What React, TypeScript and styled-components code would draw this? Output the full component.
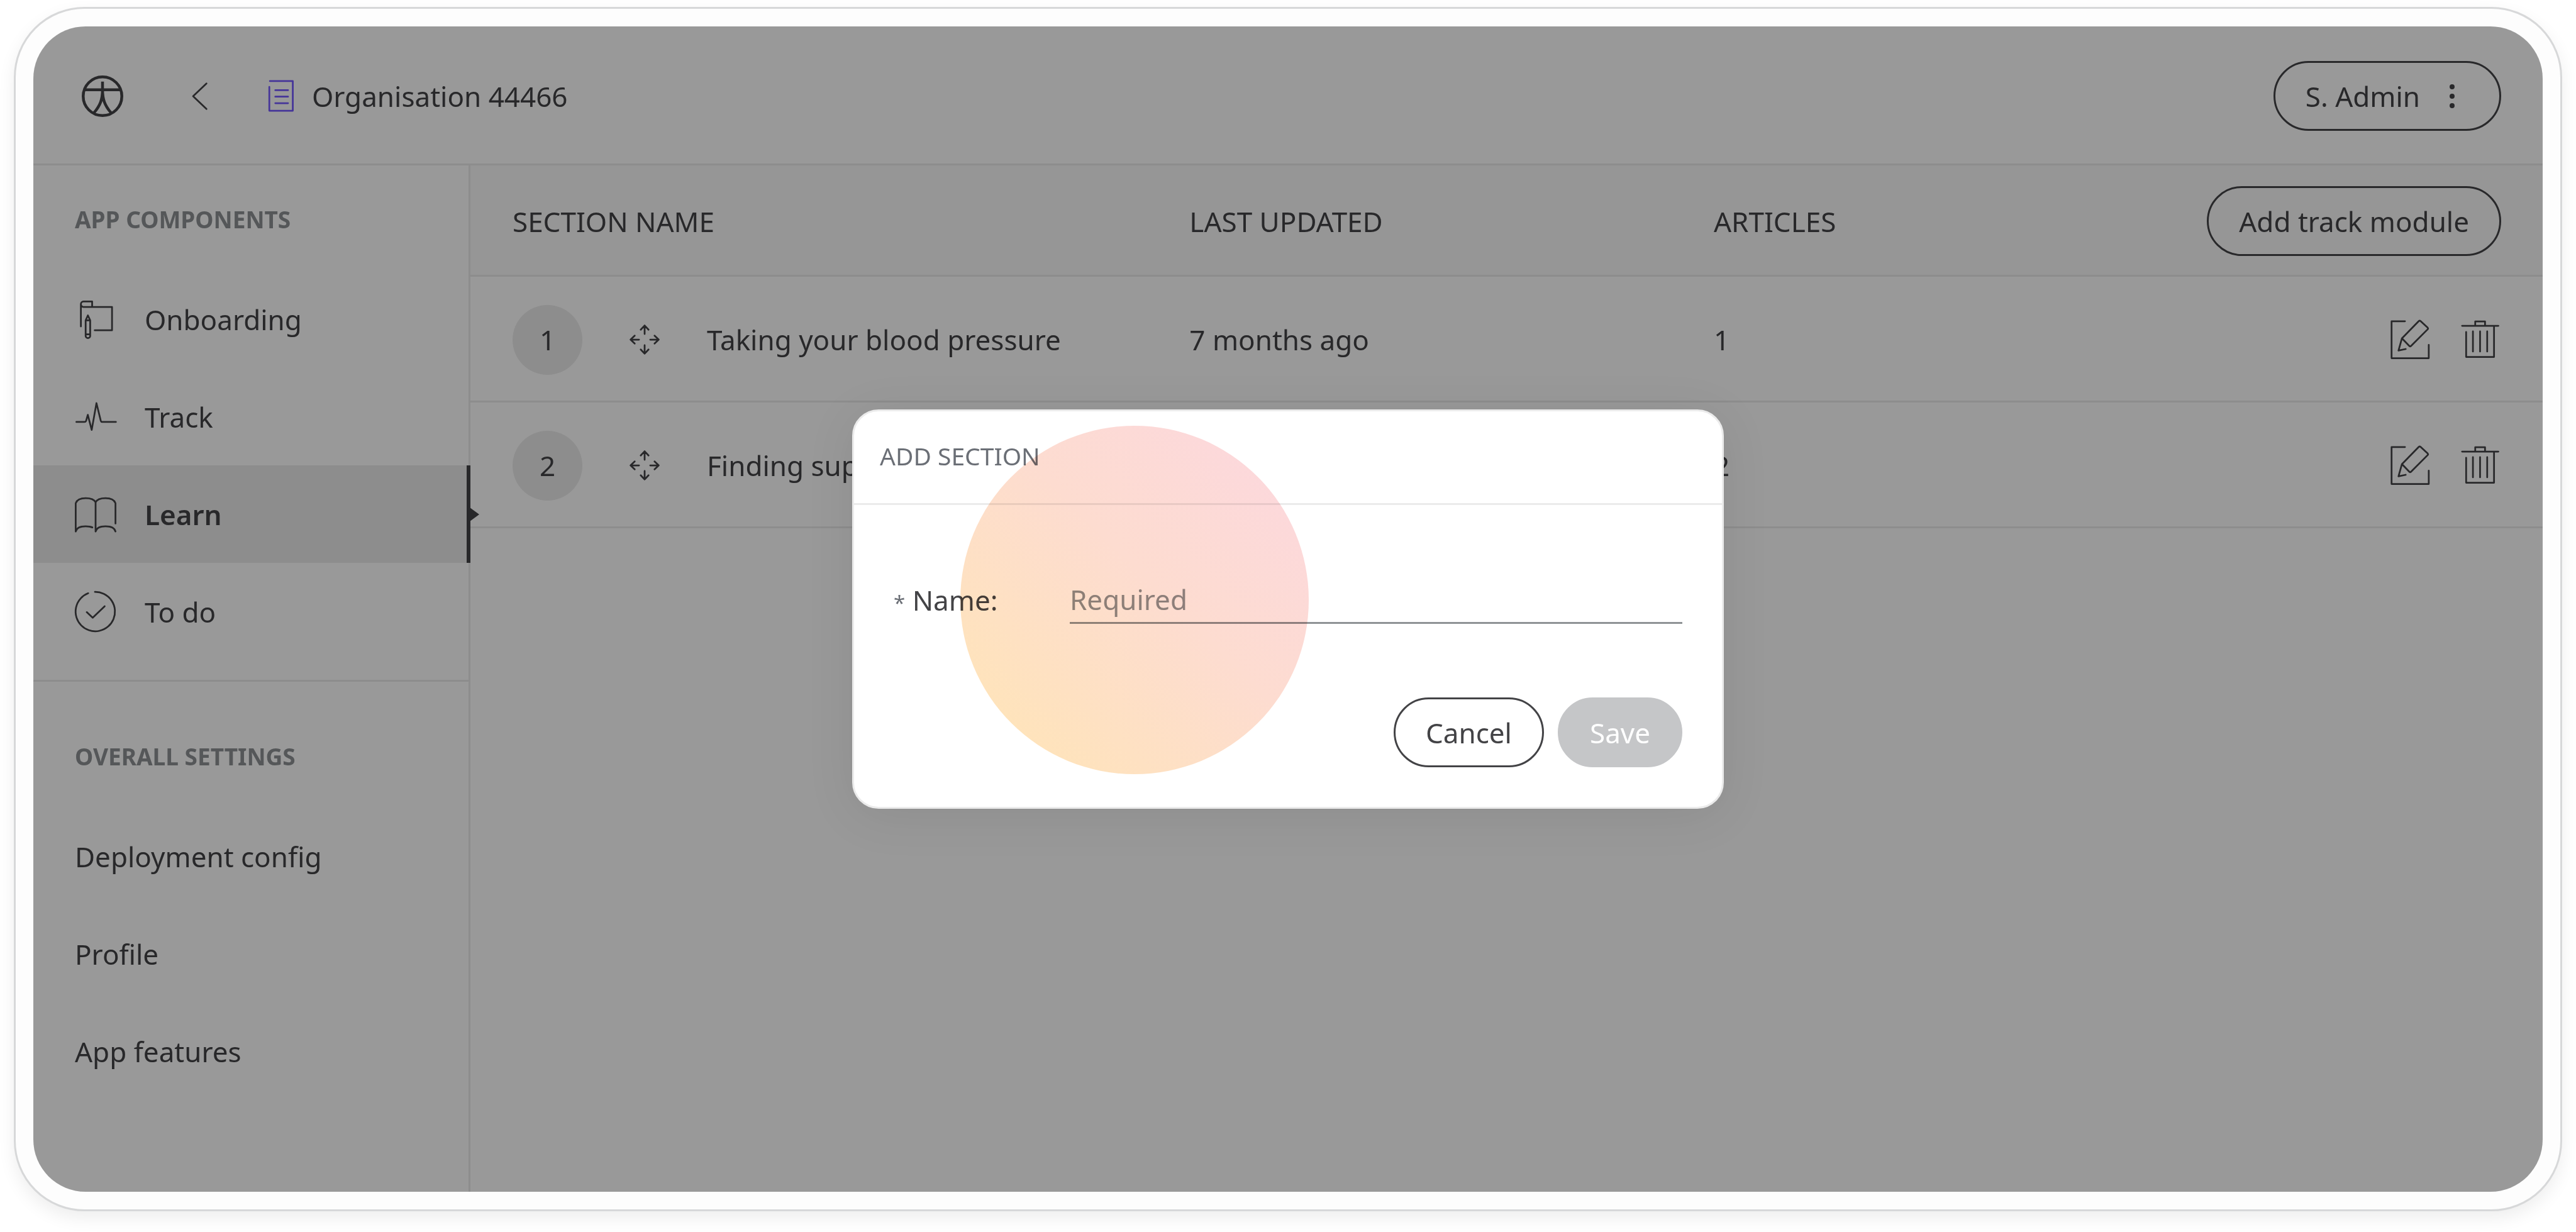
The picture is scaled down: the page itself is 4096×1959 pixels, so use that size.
import React from "react";
import styled, { createGlobalStyle, css } from "styled-components";

const color = {
  ink: "#434346",
  muted: "#8e9295",
  title: "#6b6f76",
  line: "#ebebeb",
  accent: "#7357ff",
  disabled: "#c5c6c8",
};

const GlobalStyle = createGlobalStyle`
  *, *::before, *::after { box-sizing: border-box; }
  body {
    margin: 0;
    background: #ffffff;
    color: ${color.ink};
    font-family: "Noto Sans", "Open Sans", sans-serif;
    font-size: 44px;
    line-height: 60px;
  }
  button, input { font: inherit; color: inherit; }
`;

const Page = styled.div`
  display: flex;
  min-height: 100vh;
  padding: 11px 22px 33px;
`;

const Frame = styled.div`
  display: flex;
  flex: 1;
  padding: 28px;
  border: 3px solid #d7d8d9;
  border-radius: 112px;
  background: #fdfdfd;
  box-shadow: 0 11px 28px rgba(0, 0, 0, 0.07);
`;

const Screen = styled.div`
  position: relative;
  display: flex;
  flex: 1;
  flex-direction: column;
  overflow: hidden;
  border-radius: 83px;
  background: #ffffff;
`;

const TopBar = styled.header`
  display: flex;
  align-items: center;
  height: 221px;
  padding: 3px 66px 0 77px;
  border-bottom: 3px solid ${color.line};
`;

const BackButton = styled.button`
  display: flex;
  margin: 0 74px 0 89px;
  padding: 0;
  border: 0;
  background: none;
`;

const Organisation = styled.div`
  display: flex;
  flex: 1;
  align-items: center;
  gap: 27px;
`;

const PillButton = styled.button<{ $filled?: boolean }>`
  display: inline-flex;
  align-items: center;
  height: 111px;
  padding: 0 48px;
  border: 3px solid ${color.ink};
  border-radius: 56px;
  background: none;
  white-space: nowrap;
  ${(p) =>
    p.$filled &&
    css`
      border-color: ${color.disabled};
      background: ${color.disabled};
      color: #ffffff;
    `}
`;

const UserButton = styled(PillButton)`
  gap: 18px;
  padding-right: 42px;
`;

const Body = styled.div`
  display: flex;
  flex: 1;
`;

const Sidebar = styled.nav`
  flex: none;
  width: 695px;
  border-right: 3px solid ${color.line};
`;

const NavGroup = styled.section`
  & + & {
    margin-top: 31px;
    padding-top: 33px;
    border-top: 3px solid ${color.line};
  }
`;

const NavHeading = styled.h2`
  margin: 0;
  padding: 61px 66px 56px;
  color: ${color.muted};
  font-size: 37px;
  font-weight: 700;
  line-height: 50px;
`;

const NavList = styled.ul`
  margin: 0;
  padding: 0;
  list-style: none;
`;

const NavLink = styled.a<{ $active?: boolean }>`
  position: relative;
  display: flex;
  align-items: center;
  gap: 45px;
  height: 155px;
  padding: 0 66px;
  color: inherit;
  text-decoration: none;
  ${(p) =>
    p.$active &&
    css`
      margin-right: -3px;
      border-right: 6px solid ${color.ink};
      background: ${color.line};
      font-weight: 600;
      &::after {
        content: "";
        position: absolute;
        top: 50%;
        left: 100%;
        margin: -11px 0 0 5px;
        border: solid transparent;
        border-width: 11px 0 11px 15px;
        border-left-color: ${color.ink};
      }
    `}
`;

const Main = styled.main`
  flex: 1;
  min-width: 0;
`;

const SectionTable = styled.table`
  width: 100%;
  border-collapse: separate;
  border-spacing: 0;
  table-layout: fixed;
`;

const HeadCell = styled.th`
  height: 177px;
  padding: 3px 0 0;
  border-bottom: 3px solid ${color.line};
  background: #fbfbfb;
  font-weight: 400;
  text-align: left;
  white-space: nowrap;
  &:first-child { padding-left: 67px; }
  &:last-child { padding-right: 66px; text-align: right; }
`;

const Cell = styled.td`
  height: 200px;
  padding: 3px 0 0;
  border-bottom: 3px solid ${color.line};
  white-space: nowrap;
  &:first-child { padding-left: 67px; }
  &:last-child { padding-right: 66px; }
`;

const NameCell = styled.div`
  display: flex;
  align-items: center;
  gap: 66px;
`;

const Order = styled.span`
  display: flex;
  align-items: center;
  justify-content: center;
  width: 111px;
  height: 111px;
  border-radius: 50%;
  background: ${color.line};
`;

const Actions = styled.div`
  display: flex;
  justify-content: flex-end;
  gap: 45px;
`;

const IconButton = styled.button`
  display: flex;
  padding: 0;
  border: 0;
  background: none;
`;

const Backdrop = styled.div`
  position: absolute;
  inset: 0;
  display: flex;
  align-items: center;
  justify-content: center;
  background: rgba(0, 0, 0, 0.4);
`;

const Modal = styled.form`
  position: relative;
  width: 1386px;
  max-width: 100%;
  overflow: hidden;
  border: 3px solid ${color.line};
  border-radius: 42px;
  background: #ffffff;
  box-shadow: 0 11px 80px rgba(0, 0, 0, 0.08);
`;

const ModalTitle = styled.h3`
  display: flex;
  align-items: center;
  height: 149px;
  margin: 0;
  padding: 0 41px 4px;
  border-bottom: 3px solid ${color.line};
  color: ${color.title};
  font-size: 39px;
  font-weight: 400;
`;

const ModalBody = styled.div`
  display: flex;
  flex-direction: column;
  gap: 117px;
  padding: 114px 63px 63px;
`;

const Field = styled.div`
  display: flex;
  align-items: center;
`;

const Label = styled.label`
  flex: none;
  width: 280px;
  padding-top: 3px;
`;

const Asterisk = styled.span`
  color: ${color.title};
  font-size: 33px;
`;

const TextInput = styled.input`
  flex: 1;
  min-width: 0;
  height: 75px;
  padding: 0;
  border: 0;
  border-bottom: 3px solid ${color.muted};
  border-radius: 0;
  outline: 0;
  background: none;
  &::placeholder { color: ${color.muted}; opacity: 1; }
`;

const ModalActions = styled.div`
  display: flex;
  justify-content: flex-end;
  gap: 22px;
`;

const Spotlight = styled.div`
  position: absolute;
  top: 23px;
  left: 169px;
  width: 554px;
  height: 554px;
  border-radius: 50%;
  background: linear-gradient(45deg, #ffe6b4, #fddcd0 55%, #fcd7e0);
  mix-blend-mode: multiply;
  pointer-events: none;
`;

const Glyph = styled.svg`
  display: block;
  flex: none;
  overflow: visible;
  fill: none;
  stroke: currentColor;
  stroke-width: 4;
  stroke-linecap: round;
  stroke-linejoin: round;
`;

const DocGlyph = styled(Glyph)`
  color: ${color.accent};
`;

function Icon({ d }: { d: string }) {
  return (
    <Glyph width="66" height="66" viewBox="0 0 96 96" aria-hidden="true">
      <path d={d} />
    </Glyph>
  );
}

const paths = {
  back: "M63 18.5L32 48L63 77.5",
  onboarding:
    "M14 64V12.5C14 9 16.5 6.5 20 6.5H40V19M14 12.5C14 16.5 16.5 19 20 19H86V73H46M25 50L30.2 38.5L35.5 50V86A5.2 5 0 0 1 25 86ZM25 50H35.5M25 82.5H35.5",
  track:
    "M3.5 59.5H22Q25 59.5 26 57L30 43L39 78L50 16L60 57Q60.7 59.5 63 59.5H95",
  learn:
    "M2 87.5V22C5 14 14 10.5 25 10.5S45 14 48 20C51 14 60 10.5 71 10.5S91 14 94 22V69M48 20V87.5C50 79 60 75.5 71 75.5S92 79 94 87.5M2 87.5C4 79 14 75.5 25 75.5C31 75.5 36 76 40.5 78",
  todo: "M46.5 1.8A45.5 45.5 0 1 1 31 4.8M27.5 48.5L41.3 61.5L69 35",
  move: "M48 35V15.5M39 25L48 15.5L57 25M48 61V80.5M39 71L48 80.5L57 71M35 48H15.5M25 39L15.5 48L25 57M61 48H80.5M71 39L80.5 48L71 57",
  edit: "M35 5.5H4V91H90V60M28 45L67 5.2Q69 3.5 71 5.2L87.5 20.5Q89.2 22.5 87.5 24.2L48.8 62.8Q47 64.5 45.2 62.8ZM28 45L20 73.3L36.6 69.8",
  trash:
    "M5.6 16H89.5M36 16V6H58.7V16M15 30.5V88H79.5V16M30.7 29V75.5M47.2 29V75.5M63.7 29V75.5",
};

const components = [
  { label: "Onboarding", d: paths.onboarding },
  { label: "Track", d: paths.track },
  { label: "Learn", d: paths.learn, active: true },
  { label: "To do", d: paths.todo },
];

const settings = ["Deployment config", "Profile", "App features"];

const sections = [
  { name: "Taking your blood pressure", updated: "7 months ago", articles: 1 },
  { name: "Finding sup", updated: "", articles: 2 },
];

export default function App() {
  return (
    <Page>
      <GlobalStyle />
      <Frame>
        <Screen>
          <TopBar>
            <Glyph width="66" height="66" viewBox="0 0 96 96" role="img" aria-label="Home">
              <g strokeWidth="6.6" strokeLinecap="butt">
                <circle cx="48" cy="48" r="44.7" />
                <path d="M48 14.3V42M7.3 33H88.7M48 33C48 55 43 69 28.5 86M48 33C48 55 53 69 67.5 86" />
              </g>
            </Glyph>
            <BackButton type="button" aria-label="Back">
              <Icon d={paths.back} />
            </BackButton>
            <Organisation>
              <DocGlyph width="44" height="66" viewBox="0 0 64 96" aria-hidden="true">
                <path d="M6 13H59V81.5H4.7V26.5M18.5 34H48M18.5 49H48M18.5 64H48" />
              </DocGlyph>
              Organisation 44466
            </Organisation>
            <UserButton type="button">
              S. Admin
              <Glyph width="66" height="66" viewBox="0 0 96 96" aria-hidden="true">
                <g fill="currentColor" stroke="none">
                  <circle cx="48" cy="26.2" r="5.8" />
                  <circle cx="48" cy="48" r="5.8" />
                  <circle cx="48" cy="69.8" r="5.8" />
                </g>
              </Glyph>
            </UserButton>
          </TopBar>

          <Body>
            <Sidebar>
              <NavGroup>
                <NavHeading>APP COMPONENTS</NavHeading>
                <NavList>
                  {components.map((item) => (
                    <li key={item.label}>
                      <NavLink href="#" $active={item.active}>
                        <Icon d={item.d} />
                        {item.label}
                      </NavLink>
                    </li>
                  ))}
                </NavList>
              </NavGroup>
              <NavGroup>
                <NavHeading>OVERALL SETTINGS</NavHeading>
                <NavList>
                  {settings.map((label) => (
                    <li key={label}>
                      <NavLink href="#">{label}</NavLink>
                    </li>
                  ))}
                </NavList>
              </NavGroup>
            </Sidebar>

            <Main>
              <SectionTable>
                <colgroup>
                  <col style={{ width: "34.7%" }} />
                  <col style={{ width: "25.3%" }} />
                  <col style={{ width: "20%" }} />
                  <col />
                </colgroup>
                <thead>
                  <tr>
                    <HeadCell>SECTION NAME</HeadCell>
                    <HeadCell>LAST UPDATED</HeadCell>
                    <HeadCell>ARTICLES</HeadCell>
                    <HeadCell>
                      <PillButton type="button">Add track module</PillButton>
                    </HeadCell>
                  </tr>
                </thead>
                <tbody>
                  {sections.map((section, index) => (
                    <tr key={section.name}>
                      <Cell>
                        <NameCell>
                          <Order>{index + 1}</Order>
                          <Icon d={paths.move} />
                          {section.name}
                        </NameCell>
                      </Cell>
                      <Cell>{section.updated}</Cell>
                      <Cell>{section.articles}</Cell>
                      <Cell>
                        <Actions>
                          <IconButton type="button" aria-label="Edit section">
                            <Icon d={paths.edit} />
                          </IconButton>
                          <IconButton type="button" aria-label="Delete section">
                            <Icon d={paths.trash} />
                          </IconButton>
                        </Actions>
                      </Cell>
                    </tr>
                  ))}
                </tbody>
              </SectionTable>
            </Main>
          </Body>

          <Backdrop>
            <Modal role="dialog" aria-labelledby="add-section">
              <ModalTitle id="add-section">ADD SECTION</ModalTitle>
              <ModalBody>
                <Field>
                  <Label htmlFor="section-name">
                    <Asterisk>*</Asterisk> Name:
                  </Label>
                  <TextInput id="section-name" type="text" placeholder="Required" />
                </Field>
                <ModalActions>
                  <PillButton type="button">Cancel</PillButton>
                  <PillButton type="submit" $filled disabled>
                    Save
                  </PillButton>
                </ModalActions>
              </ModalBody>
              <Spotlight />
            </Modal>
          </Backdrop>
        </Screen>
      </Frame>
    </Page>
  );
}
